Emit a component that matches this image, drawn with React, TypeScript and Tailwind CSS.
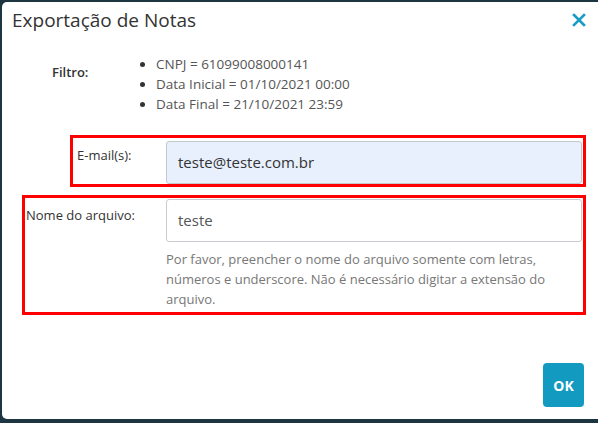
export default function App() {
  return (
    <div
      className="w-[598px] h-[423px] bg-[#1d3540] pt-[2px] pl-[2px] overflow-hidden"
      style={{ fontFamily: "'Open Sans', 'Noto Sans', sans-serif" }}
    >
      <div className="w-[610px] h-[417px] bg-white rounded-[5px] relative flex flex-col">
        {/* header */}
        <div className="flex items-center h-[36px] pl-[10px] pr-[12px] w-[596px]">
          <h1 className="text-[19px] text-[#333] flex-1 leading-none">Exportação de Notas</h1>
          <svg width="14" height="14" viewBox="0 0 14 14">
            <path d="M2 2 L12 12 M12 2 L2 12" stroke="#1a9cc4" strokeWidth="2.6" strokeLinecap="square" />
          </svg>
        </div>

        {/* filtro */}
        <div className="flex mt-[16px] ml-[50px] text-[13px]">
          <div className="w-[93px] pt-[9px] text-[#333] font-semibold">Filtro:</div>
          <ul className="list-disc pl-[11px] text-[13.5px] text-[#555] leading-[20px] marker:text-[#333]">
            <li>CNPJ = 61099008000141</li>
            <li>Data Inicial = 01/10/2021 00:00</li>
            <li>Data Final = 21/10/2021 23:59</li>
          </ul>
        </div>

        {/* email */}
        <div className="ml-[68px] mt-[21px] w-[516px] h-[52px] border-[3px] border-[#f00] flex">
          <div className="w-[93px] pl-[4px] pt-[8px] text-[13px] text-[#333]">E-mail(s):</div>
          <div className="w-[416px] h-[43px] mt-[3px] bg-[#e8f0fe] border border-[#c4c8cc] rounded-[3px] flex items-center pl-[11px] text-[15px] text-[#333]">
            teste@teste.com.br
          </div>
        </div>

        {/* nome do arquivo */}
        <div className="ml-[20px] mt-[8px] w-[564px] h-[120px] border-[3px] border-[#f00] flex">
          <div className="w-[141px] pl-[1px] pt-[8px] text-[13px] text-[#333]">Nome do arquivo:</div>
          <div className="flex flex-col">
            <div className="w-[416px] h-[43px] mt-[1px] bg-white border border-[#c8ccd0] rounded-[3px] flex items-center pl-[11px] text-[15px] text-[#555]">
              teste
            </div>
            <p className="mt-[7px] w-[412px] text-[13px] leading-[20px] text-[#777]">
              Por favor, preencher o nome do arquivo somente com letras, números e underscore. Não é necessário digitar a extensão do arquivo.
            </p>
          </div>
        </div>

        {/* footer */}
        <div className="flex justify-end w-[582px] mt-[48px]">
          <button className="w-[41px] h-[44px] bg-[#139ac1] rounded-[4px] text-white font-bold text-[14px]">OK</button>
        </div>
      </div>
    </div>
  );
}
